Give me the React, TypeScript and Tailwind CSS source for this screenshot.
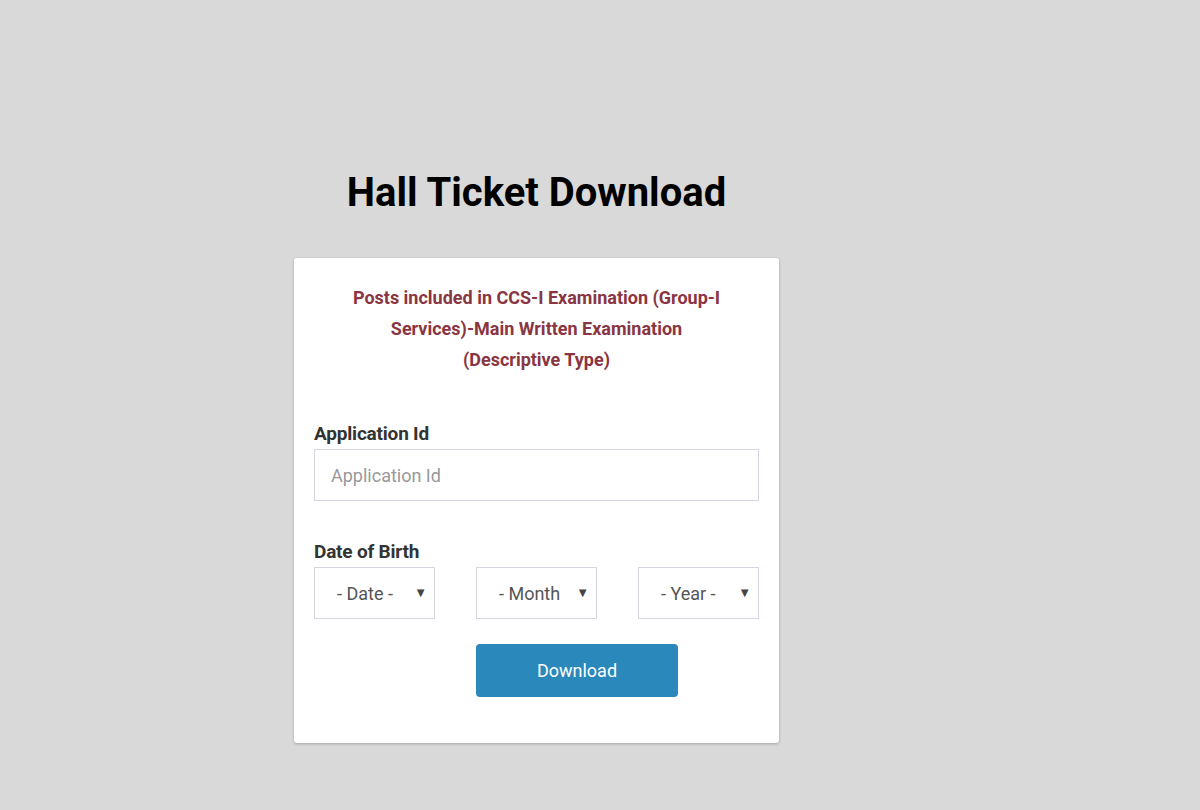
import React from "react";

const font = { fontFamily: "Roboto, 'Noto Sans', sans-serif" };

function Sel({ label }: { label: string }) {
  return (
    <div className="relative h-[52px] w-[121px] border border-[#d4d6e4] bg-white flex items-center pl-[22px] text-[18px] text-[#555]">
      <span>{label}</span>
      <span className="absolute right-[7px] top-[15px] text-[13px] text-[#444]">▼</span>
    </div>
  );
}

export default function App() {
  return (
    <div className="min-h-[810px] w-full bg-[#d9d9d9]" style={font}>
      <div className="ml-[294px] w-[485px] pt-[168px]">
        <h1 className="text-center text-[40px] font-bold leading-[50px] text-black">
          Hall Ticket Download
        </h1>
        <div className="mt-[40px] rounded-[3px] bg-white px-[20px] pt-[24px] pb-[46px] shadow-[0_1px_3px_rgba(0,0,0,0.25)]">
          <p className="text-center text-[18px] font-bold leading-[31px] text-[#8a3542]">
            Posts included in CCS-I Examination (Group-I
            <br />
            Services)-Main Written Examination
            <br />
            (Descriptive Type)
          </p>
          <div className="mt-[47px]">
            <label className="block text-[19px] font-bold leading-[24px] text-[#333] tracking-[-0.2px]">Application Id</label>
            <div className="mt-[3px] flex h-[52px] items-center border border-[#d4d6e4] px-[16px] text-[18px] text-[#999]">
              Application Id
            </div>
          </div>
          <div className="mt-[39px]">
            <label className="block text-[19px] font-bold leading-[24px] text-[#333] tracking-[-0.2px]">Date of Birth</label>
            <div className="mt-[3px] flex justify-between">
              <Sel label="- Date -" />
              <Sel label="- Month" />
              <Sel label="- Year -" />
            </div>
          </div>
          <div className="mt-[25px] pl-[162px]">
            <button className="h-[53px] w-[202px] rounded-[4px] bg-[#2a88bb] text-[18px] text-white">
              Download
            </button>
          </div>
        </div>
      </div>
    </div>
  );
}
